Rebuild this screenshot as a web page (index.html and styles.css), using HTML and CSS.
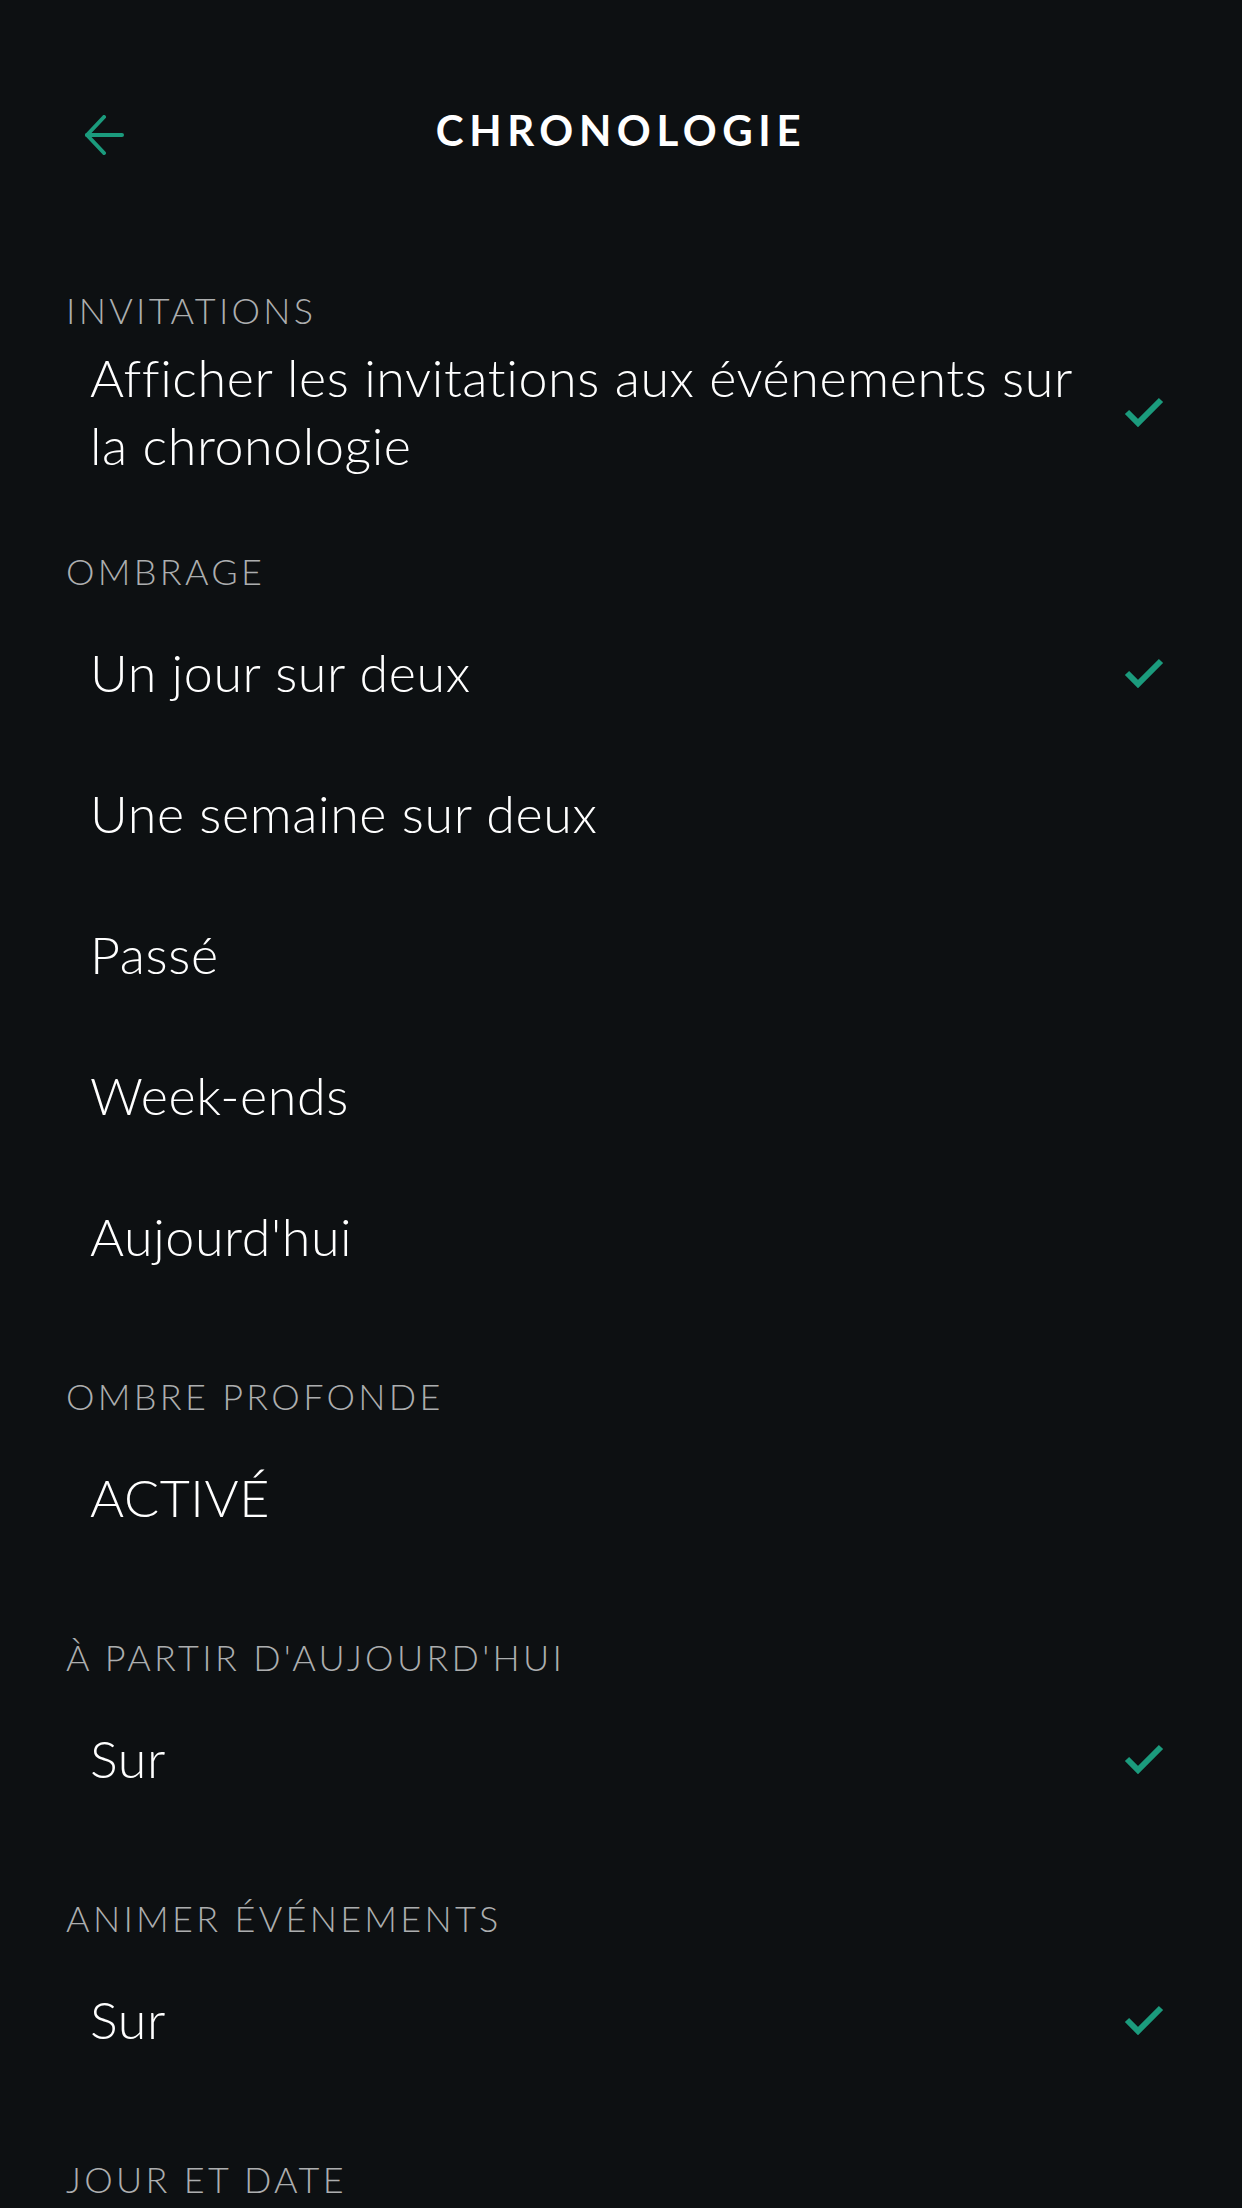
FILE: index.html
```html
<!DOCTYPE html>
<html lang="fr">

<head>
  <meta charset="UTF-8">
  <meta name="viewport" content="width=device-width, initial-scale=1.0">
  <title>Chronologie</title>
  <link rel="stylesheet" href="styles.css">
</head>

<body>
  <div class="settings-page">
    <header class="topbar">
      <button class="back-button" aria-label="Retour">
        <svg width="40" height="40" viewBox="0 0 40 40" fill="none" stroke="#1b9b7d" stroke-width="4" stroke-linecap="round" stroke-linejoin="round">
          <path d="M38 20H3" />
          <path d="M20 2L3 20L20 38" />
        </svg>
      </button>
      <h1>CHRONOLOGIE</h1>
      <div></div>
    </header>

    <section class="group">
      <h2>INVITATIONS</h2>
      <div class="option">
        <span class="label wide">Afficher les invitations aux événements sur la chronologie</span>
        <span class="check"></span>
      </div>
    </section>

    <section class="group">
      <h2>OMBRAGE</h2>
      <div class="option">
        <span class="label">Un jour sur deux</span>
        <span class="check"></span>
      </div>
      <div class="option">
        <span class="label">Une semaine sur deux</span>
      </div>
      <div class="option">
        <span class="label">Passé</span>
      </div>
      <div class="option">
        <span class="label">Week-ends</span>
      </div>
      <div class="option">
        <span class="label">Aujourd'hui</span>
      </div>
    </section>

    <section class="group">
      <h2>OMBRE PROFONDE</h2>
      <div class="option">
        <span class="label">ACTIVÉ</span>
      </div>
    </section>

    <section class="group">
      <h2>À PARTIR D'AUJOURD'HUI</h2>
      <div class="option">
        <span class="label">Sur</span>
        <span class="check"></span>
      </div>
    </section>

    <section class="group">
      <h2>ANIMER ÉVÉNEMENTS</h2>
      <div class="option">
        <span class="label">Sur</span>
        <span class="check"></span>
      </div>
    </section>

    <section class="group">
      <h2>JOUR ET DATE</h2>
    </section>
  </div>
</body>

</html>
```
FILE: styles.css
```css
body {
  margin: 0;
  background-color: #0d1012;
  font-family: Lato, "Noto Sans", sans-serif;
  color: #fff;
  height: 2208px;
  overflow: hidden;
}

.topbar {
  display: grid;
  grid-template-columns: 1fr auto 1fr;
  align-items: center;
  height: 260px;
}

.back-button {
  justify-self: start;
  margin-left: 84px;
  margin-top: 10px;
  padding: 0;
  background: none;
  border: none;
  display: flex;
}

.topbar h1 {
  margin: 0;
  font-size: 42px;
  font-weight: 700;
  letter-spacing: 5.6px;
  line-height: 1;
}

.group {
  margin-top: 60px;
}

.topbar + .group {
  margin-top: 20px;
}

.group h2 {
  margin: 0;
  height: 60px;
  line-height: 60px;
  padding-left: 66px;
  font-size: 36px;
  font-weight: 300;
  letter-spacing: 3.3px;
  color: #acaeaf;
}

.option {
  display: flex;
  align-items: center;
  justify-content: space-between;
  min-height: 141px;
  padding: 0 79px 0 90px;
}

.label {
  font-size: 52px;
  font-weight: 300;
  letter-spacing: 0.6px;
  line-height: 68px;
}

.label.wide {
  max-width: 1010px;
}

.check {
  width: 40px;
  height: 32px;
  flex-shrink: 0;
  margin-right: -1px;
  background: no-repeat center / contain url("data:image/svg+xml,%3Csvg xmlns='http://www.w3.org/2000/svg' viewBox='0 0 40 32'%3E%3Cpath d='M3 17L14 28L37 5' fill='none' stroke='%231b9b7d' stroke-width='6'/%3E%3C/svg%3E");
}
```
